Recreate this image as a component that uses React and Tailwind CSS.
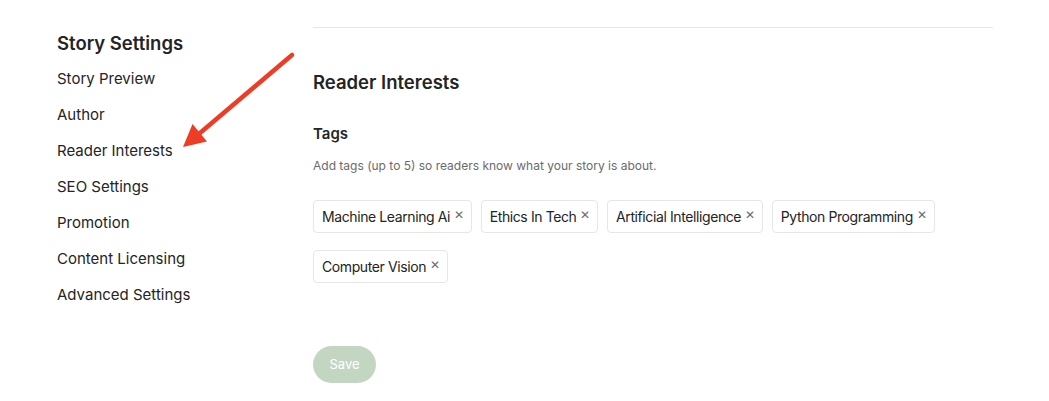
import React from "react";

const menu = [
  "Story Preview",
  "Author",
  "Reader Interests",
  "SEO Settings",
  "Promotion",
  "Content Licensing",
  "Advanced Settings",
];

const tags = [
  "Machine Learning Ai",
  "Ethics In Tech",
  "Artificial Intelligence",
  "Python Programming",
  "Computer Vision",
];

const Tag = ({ label }) => (
  <div className="flex h-[33px] items-center rounded-[4px] border border-[#e6e6e6] pl-[8px] pr-[7px] text-[14px] tracking-[-0.4px] text-[#242424]">
    <span>{label}</span>
    <span className="ml-[4px] -mt-[3px] text-[12px] text-[#6b6b6b]">✕</span>
  </div>
);

export default function App() {
  return (
    <div
      className="relative flex h-[401px] w-[1049px] bg-white text-[#242424]"
      style={{ fontFamily: "Inter, 'Liberation Sans', sans-serif" }}
    >
      {/* Sidebar */}
      <aside className="w-[313px] pl-[57px] pt-[25px]">
        <h2 className="text-[18.5px] font-semibold leading-[36px]">
          Story Settings
        </h2>
        <ul>
          {menu.map((item) => (
            <li key={item} className="text-[15px] leading-[36px]">
              {item}
            </li>
          ))}
        </ul>
      </aside>

      {/* Main */}
      <main className="w-[680px] pt-[27px]">
        <div className="h-px bg-[#e6e6e6]"></div>
        <h1 className="mt-[42px] text-[18.5px] font-semibold leading-[24px]">
          Reader Interests
        </h1>
        <h3 className="mt-[30px] text-[15px] font-semibold leading-[20px]">Tags</h3>
        <p className="mt-[14px] text-[12px] leading-[16px] text-[#6b6b6b]">
          Add tags (up to 5) so readers know what your story is about.
        </p>
        <div className="mt-[26px] flex flex-wrap gap-x-[9px] gap-y-[17px]">
          {tags.map((t) => (
            <Tag key={t} label={t} />
          ))}
        </div>
        <button className="mt-[63px] flex h-[37px] w-[63px] items-center justify-center rounded-full bg-[#c3d6c1] text-[13px] text-white">
          Save
        </button>
      </main>

      {/* Annotation arrow */}
      <svg
        className="pointer-events-none absolute left-0 top-0"
        width="1049"
        height="401"
        viewBox="0 0 1049 401"
      >
        <line x1="292" y1="55" x2="200" y2="133" stroke="#ee3d25" strokeWidth="4.5" strokeLinecap="round" />
        <polygon points="183,147 192.5,124 207,141.5" fill="#ee3d25" />
      </svg>
    </div>
  );
}
